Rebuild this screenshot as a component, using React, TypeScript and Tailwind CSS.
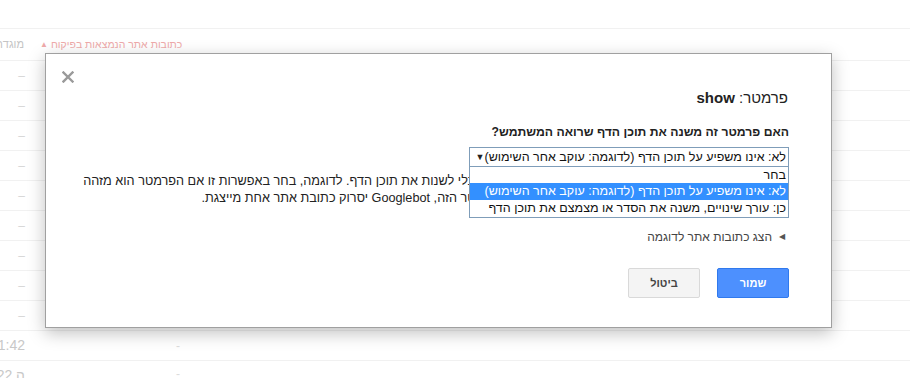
import React from "react";

const rowsTop = Array.from({ length: 9 });

export default function App() {
  return (
    <div
      className="relative w-[910px] h-[378px] overflow-hidden bg-white"
      style={{ fontFamily: '"Liberation Sans", Arial, sans-serif' }}
    >
      {/* background table (faint) */}
      <div className="flex flex-col">
        <div className="h-[28px]" />
        <div className="h-[32px] border-t border-[#f1f1f1] flex items-center text-[11px]">
          <div className="w-[24px] overflow-hidden flex justify-end">
            <span dir="rtl" className="whitespace-nowrap text-[#c4c4c4]">מוגדר</span>
          </div>
          <div className="ml-[16px] flex items-center gap-[3px] text-[#eeaaaa]">
            <span className="text-[8px]">▲</span>
            <span dir="rtl" className="whitespace-nowrap text-[10.5px]">כתובות אתר הנמצאות בפיקוח</span>
          </div>
        </div>
        {rowsTop.map((_, i) => (
          <div key={i} className="h-[30px] border-t border-[#f1f1f1] flex items-center">
            <div className="w-[26px] flex justify-end pr-[1px] text-[12px] text-[#d6d6d6]">–</div>
          </div>
        ))}
        <div className="h-[30px] border-t border-[#f1f1f1] flex items-center text-[14px] text-[#c8c8c8]">
          <div className="w-[25px] overflow-hidden flex justify-end">
            <span className="whitespace-nowrap">11:42</span>
          </div>
          <div className="ml-[151px] text-[12px] text-[#dcdcdc]">-</div>
        </div>
        <div className="h-[30px] border-t border-[#f1f1f1] flex items-start pt-[4px] text-[14px] text-[#c8c8c8]">
          <div className="w-[25px] overflow-hidden flex justify-end">
            <span dir="rtl" className="whitespace-nowrap">ה 22</span>
          </div>
          <div className="ml-[151px] text-[12px] text-[#dcdcdc]">-</div>
        </div>
      </div>

      {/* modal */}
      <div className="absolute left-[45px] top-[53px] w-[787px] h-[275px] bg-white border border-[#a0a0a0] shadow-[0_5px_16px_rgba(0,0,0,0.25)]">
        <div className="absolute left-[16px] top-[17px] w-[12px] h-[12px]">
          <svg width="12" height="12" viewBox="0 0 12 12">
            <path d="M1.5 1.5 L10.5 10.5 M10.5 1.5 L1.5 10.5" stroke="#9a9a9a" strokeWidth="2.4" strokeLinecap="square" />
          </svg>
        </div>

        <div dir="rtl" className="flex flex-col items-start pr-[42px] pl-[30px] pt-[34px] text-[#222]">
          <div className="text-[15px] leading-[20px] mr-[1px]">
            פרמטר: <span className="font-bold">show</span>
          </div>
          <div className="mt-[16px] text-[12.2px] leading-[16px] font-bold">
            האם פרמטר זה משנה את תוכן הדף שרואה המשתמש?
          </div>

          <div className="relative mt-[7px] w-[320px] z-10">
            <div className="h-[20px] border border-[#7f9db9] bg-white flex items-center justify-between pr-[2px] pl-[7px] text-[12.5px] leading-[16px] text-[#111]">
              <span className="whitespace-nowrap">לא: אינו משפיע על תוכן הדף (לדוגמה: עוקב אחר השימוש)</span>
              <span className="text-[9px] text-[#222]">▼</span>
            </div>
            <div className="absolute top-[19px] right-0 w-[320px] border border-[#7f9db9] bg-white text-[12.5px] leading-[17px] text-[#111]">
              <div className="h-[16px] flex items-center pr-[2px]">בחר</div>
              <div className="h-[17px] flex items-center pr-[2px] bg-[#3390ff] text-white whitespace-nowrap">
                לא: אינו משפיע על תוכן הדף (לדוגמה: עוקב אחר השימוש)
              </div>
              <div className="h-[17px] flex items-center pr-[2px] whitespace-nowrap">
                כן: עורך שינויים, משנה את הסדר או מצמצם את תוכן הדף
              </div>
            </div>
          </div>

          <div className="mt-[6px] text-[12.7px] leading-[17px] text-[#222]">
            <div className="whitespace-nowrap">
              בחר באפשרות זו אם הפרמטר פשוט נוסף לכתובות האתר מבלי לשנות את תוכן הדף. לדוגמה, בחר באפשרות זו אם הפרמטר הוא מזהה
            </div>
            <div className="whitespace-nowrap">
              המשמש למעקב אחר השימוש, כגון מזהה הסשן. עבור הפרמטר הזה, Googlebot יסרוק כתובת אתר אחת מייצגת.
            </div>
          </div>

          <div className="mt-[22px] mr-[4px] flex items-center gap-[7px] text-[12px] leading-[16px] text-[#444]">
            <span className="text-[8px] text-[#555]">◀</span>
            <span>הצג כתובות אתר לדוגמה</span>
          </div>

          <div className="mt-[23px] flex gap-[17px]">
            <button className="w-[72px] h-[30px] rounded-[2px] border border-[#3079ed] bg-[#4d90fe] text-white text-[11px] font-bold">
              שמור
            </button>
            <button className="w-[72px] h-[30px] rounded-[2px] border border-[#d9d9d9] bg-[#f4f4f4] text-[#444] text-[11px] font-bold">
              ביטול
            </button>
          </div>
        </div>
      </div>
    </div>
  );
}
